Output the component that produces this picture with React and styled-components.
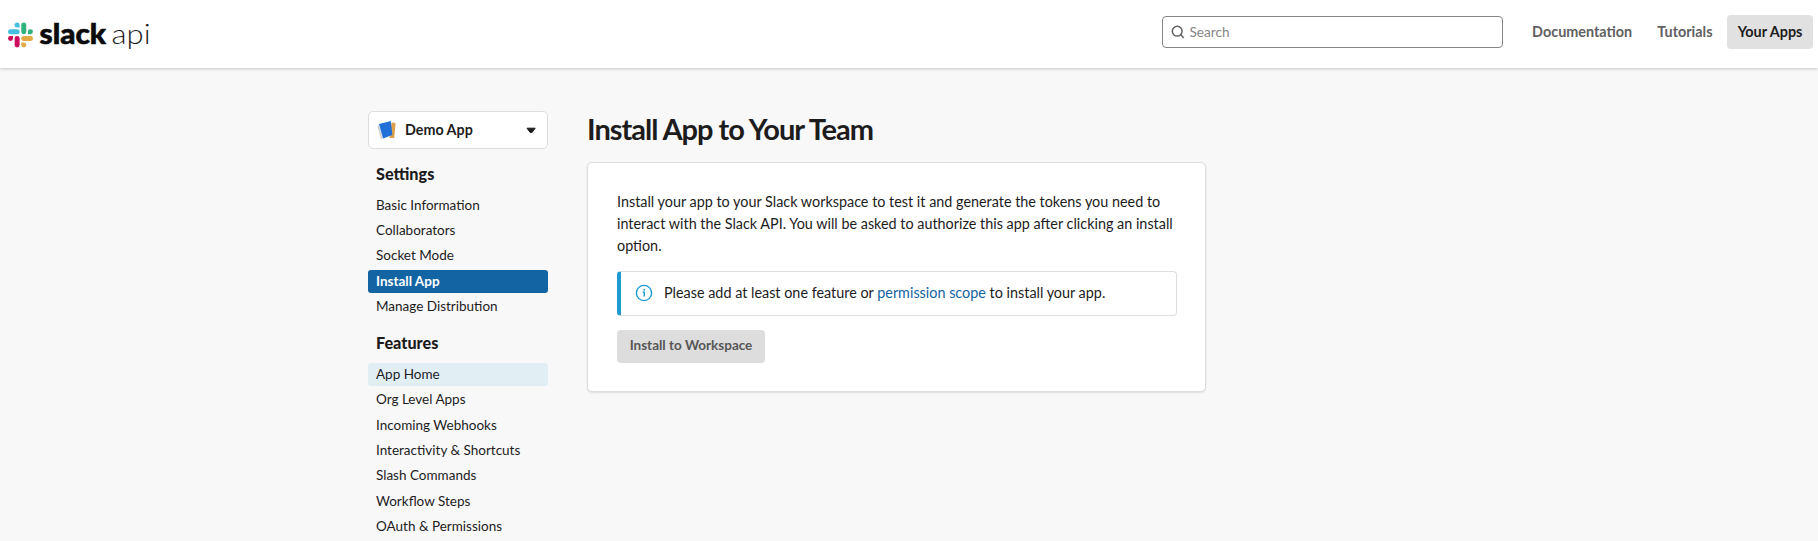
import React from "react";
import styled, { createGlobalStyle, css } from "styled-components";

const GlobalStyle = createGlobalStyle`
  *, *::before, *::after { box-sizing: border-box; }
  html { background: #f8f8f8; }
  body {
    margin: 0;
    height: 541px;
    overflow: hidden;
    background: #f8f8f8;
    color: #1d1c1d;
    font-family: Lato, "Liberation Sans", sans-serif;
    font-size: 14.39px;
    line-height: 22px;
  }
`;

const Header = styled.header`
  display: flex;
  align-items: flex-start;
  height: 68px;
  padding: 15px 5px 0 8px;
  background: #fff;
  box-shadow: 0 1px 3px rgba(0, 0, 0, 0.2);
`;

const Logo = styled.a`
  display: flex;
  margin-top: -2.5px;
  margin-right: auto;
`;

const SearchBox = styled.label`
  display: flex;
  align-items: center;
  gap: 4.5px;
  width: 341px;
  height: 32px;
  margin: 1px 18.5px 0 0;
  padding: 0 8px;
  border: 1px solid #868686;
  border-radius: 4px;
`;

const SearchInput = styled.input`
  flex: 1;
  min-width: 0;
  padding: 0;
  border: 0;
  outline: 0;
  background: transparent;
  color: #1d1c1d;
  font: 13.6px/20px Lato, sans-serif;
  &::placeholder { color: #868686; opacity: 1; }
`;

const Nav = styled.nav`
  display: flex;
  gap: 4px;
`;

const NavLink = styled.a`
  height: 34px;
  padding: 0 10.6px;
  border-radius: 4px;
  background: ${(p) => (p.$active ? "#e1e1e1" : "transparent")};
  color: ${(p) => (p.$active ? "#1d1c1d" : "#616061")};
  font-weight: 700;
  line-height: 33px;
  white-space: nowrap;
`;

const Page = styled.div`
  display: flex;
  gap: 39px;
  width: 1082px;
  margin: 0 auto;
  padding-top: 43px;
`;

const Sidebar = styled.aside`
  flex: none;
  width: 180px;
`;

const AppPicker = styled.button`
  display: flex;
  align-items: center;
  gap: 8px;
  width: 180px;
  height: 38px;
  padding: 0 11px 0 8px;
  border: 1px solid #ddd;
  border-radius: 5px;
  background: #fff;
  color: #1d1c1d;
  font: 700 14.3px/22px Lato, sans-serif;
`;

const AppName = styled.span`
  flex: 1;
  text-align: left;
`;

const GroupTitle = styled.h2`
  margin: 13.9px 0 8.85px;
  padding-left: 8px;
  font-size: 16.2px;
  font-weight: 900;
  line-height: 22px;
`;

const MenuList = styled.ul`
  display: flex;
  flex-direction: column;
  gap: 2px;
  margin: 0;
  padding: 0;
  list-style: none;
`;

const MenuItem = styled.li`
  height: 23.33px;
  padding-left: 8px;
  border-radius: 3px;
  font-size: 13.5px;
  line-height: 22px;
  ${(p) => p.$state === "current" && css`
    background: #1264a3;
    color: #fff;
    font-weight: 700;
  `}
  ${(p) => p.$state === "hover" && css`
    background: #e1eff5;
  `}
`;

const Main = styled.main`
  width: 619px;
`;

const Title = styled.h1`
  margin: 0 0 16px;
  font-size: 29px;
  font-weight: 700;
  line-height: 35px;
  letter-spacing: -1px;
`;

const Card = styled.section`
  height: 230px;
  padding: 27.5px 29px 0;
  border: 1px solid #ddd;
  border-radius: 5px;
  background: #fff;
  box-shadow: 0 1px 2px rgba(0, 0, 0, 0.1);
`;

const Intro = styled.p`
  margin: 0 0 14.5px;
`;

const Notice = styled.div`
  display: flex;
  align-items: center;
  gap: 11px;
  width: 560px;
  height: 45px;
  margin-bottom: 14px;
  padding: 0 0 2px 14px;
  border: 1px solid #ddd;
  border-left: 4px solid #1d9bd1;
  border-radius: 4px;
`;

const ScopeLink = styled.a`
  color: #1264a3;
`;

const InstallButton = styled.button`
  display: block;
  width: 148px;
  height: 33px;
  padding: 0 0 3px;
  border: 0;
  border-radius: 4px;
  background: #ddd;
  color: #565556;
  font: 700 13.5px/20px Lato, sans-serif;
`;

const LogoMark = () => (
  <svg width="150" height="46" viewBox="0 -6 150 46" aria-label="slack api">
    <g transform="translate(0 3.6) scale(0.2042)">
      <path fill="#44bfdf" d="M44.7 0a12.2 12.2 0 0 0 0 24.5h12.2V12.2A12.2 12.2 0 0 0 44.7 0m0 32.6H12.2a12.2 12.2 0 0 0 0 24.5h32.5a12.2 12.2 0 0 0 0-24.5" />
      <path fill="#2fb27c" d="M122 44.8a12.2 12.2 0 0 0-24.4 0V57h12.2A12.2 12.2 0 0 0 122 44.8m-32.5 0V12.2a12.2 12.2 0 0 0-24.4 0v32.6a12.2 12.2 0 0 0 24.4 0" />
      <path fill="#e2aa42" d="M77.3 122.3a12.2 12.2 0 0 0 0-24.4H65.1v12.2a12.2 12.2 0 0 0 12.2 12.2m0-32.6h32.5a12.2 12.2 0 0 0 0-24.5H77.3a12.2 12.2 0 0 0 0 24.5" />
      <path fill="#cd0f5b" d="M0 77.5a12.2 12.2 0 0 0 24.4 0V65.2H12.2A12.2 12.2 0 0 0 0 77.5m32.5 0V110a12.2 12.2 0 0 0 24.4 0V77.5a12.2 12.2 0 0 0-24.4 0" />
    </g>
    <text x="31.5" y="24.5" textLength="66.5" lengthAdjust="spacingAndGlyphs" fontFamily="Lato" fontWeight="900" fontSize="27.6" fill="#0b0b0b" stroke="#0b0b0b" strokeWidth="0.6">slack</text>
    <text x="103.6" y="24.5" textLength="39" lengthAdjust="spacingAndGlyphs" fontFamily="Lato" fontWeight="300" fontSize="27.6" fill="#1d1c1d">api</text>
  </svg>
);

const SearchIcon = () => (
  <svg width="14" height="14" viewBox="0 0 14 14" fill="none" stroke="#616061" strokeWidth="1.5" strokeLinecap="round">
    <circle cx="6.2" cy="6.2" r="4.9" />
    <path d="M9.8 9.8 12.4 12.5" />
  </svg>
);

const AppIcon = () => (
  <svg width="20" height="20" viewBox="0 0 20 20">
    <path fill="#cfcfcf" d="M0.4 6 2 5.2 5.4 18.4 4 19.2z" />
    <path fill="#e0a04a" d="M14.6 2.6 18.6 3 17.2 18 12.4 18z" />
    <path fill="#236fd8" d="M2 4 13.8 0.9 15.4 15 6 18.5z" />
  </svg>
);

const Caret = () => (
  <svg width="10" height="7" viewBox="0 0 10 7">
    <path fill="#1d1c1d" stroke="#1d1c1d" strokeLinejoin="round" d="M1 1.2h8.2L5.9 5.6H4.3z" />
  </svg>
);

const InfoIcon = () => (
  <svg width="18" height="18" viewBox="0 0 18 18" fill="none" stroke="#1d9bd1">
    <circle cx="9" cy="9" r="7.6" strokeWidth="1.4" />
    <path strokeWidth="1.5" d="M7.8 8.3H9.3V12.6" />
    <circle cx="9.2" cy="5.9" r="0.95" fill="#1d9bd1" stroke="none" />
  </svg>
);

const groups = [
  {
    title: "Settings",
    items: [
      ["Basic Information"],
      ["Collaborators"],
      ["Socket Mode"],
      ["Install App", "current"],
      ["Manage Distribution"],
    ],
  },
  {
    title: "Features",
    items: [
      ["App Home", "hover"],
      ["Org Level Apps"],
      ["Incoming Webhooks"],
      ["Interactivity & Shortcuts"],
      ["Slash Commands"],
      ["Workflow Steps"],
      ["OAuth & Permissions"],
    ],
  },
];

export default function App() {
  return (
    <>
      <GlobalStyle />
      <Header>
        <Logo><LogoMark /></Logo>
        <SearchBox>
          <SearchIcon />
          <SearchInput placeholder="Search" />
        </SearchBox>
        <Nav>
          <NavLink>Documentation</NavLink>
          <NavLink>Tutorials</NavLink>
          <NavLink $active>Your Apps</NavLink>
        </Nav>
      </Header>
      <Page>
        <Sidebar>
          <AppPicker>
            <AppIcon />
            <AppName>Demo App</AppName>
            <Caret />
          </AppPicker>
          {groups.map((group) => (
            <React.Fragment key={group.title}>
              <GroupTitle>{group.title}</GroupTitle>
              <MenuList>
                {group.items.map(([label, state]) => (
                  <MenuItem key={label} $state={state}>{label}</MenuItem>
                ))}
              </MenuList>
            </React.Fragment>
          ))}
        </Sidebar>
        <Main>
          <Title>Install App to Your Team</Title>
          <Card>
            <Intro>
              Install your app to your Slack workspace to test it and generate the tokens you need to
              interact with the Slack API. You will be asked to authorize this app after clicking an
              install option.
            </Intro>
            <Notice>
              <InfoIcon />
              <span>
                Please add at least one feature or <ScopeLink>permission scope</ScopeLink> to install your app.
              </span>
            </Notice>
            <InstallButton>Install to Workspace</InstallButton>
          </Card>
        </Main>
      </Page>
    </>
  );
}
